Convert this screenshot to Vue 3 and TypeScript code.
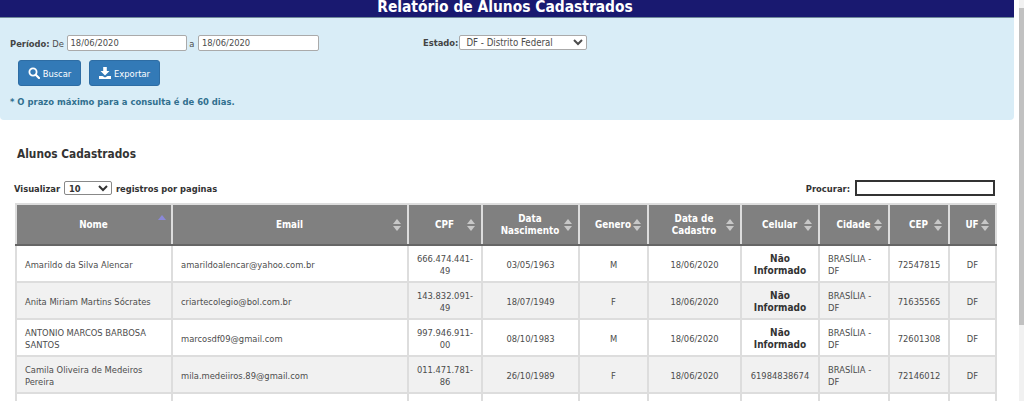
<script setup lang="ts">
interface Row { nome: string; email: string; cpf: string; nasc: string; gen: string; cad: string; cel: string; cep: string }
const rows: Row[] = [
  { nome: 'Amarildo da Silva Alencar', email: 'amarildoalencar@yahoo.com.br', cpf: '666.474.441-49', nasc: '03/05/1963', gen: 'M', cad: '18/06/2020', cel: '', cep: '72547815' },
  { nome: 'Anita Miriam Martins Sócrates', email: 'criartecolegio@bol.com.br', cpf: '143.832.091-49', nasc: '18/07/1949', gen: 'F', cad: '18/06/2020', cel: '', cep: '71635565' },
  { nome: 'ANTONIO MARCOS BARBOSA SANTOS', email: 'marcosdf09@gmail.com', cpf: '997.946.911-00', nasc: '08/10/1983', gen: 'M', cad: '18/06/2020', cel: '', cep: '72601308' },
  { nome: 'Camila Oliveira de Medeiros Pereira', email: 'mila.medeiiros.89@gmail.com', cpf: '011.471.781-86', nasc: '26/10/1989', gen: 'F', cad: '18/06/2020', cel: '61984838674', cep: '72146012' },
]
const heads: { t: string; w: number; sorted?: boolean }[] = [
  { t: 'Nome', w: 156, sorted: true }, { t: 'Email', w: 236 }, { t: 'CPF', w: 74 },
  { t: 'Data Nascimento', w: 97 }, { t: 'Genero', w: 69 }, { t: 'Data de Cadastro', w: 93 },
  { t: 'Celular', w: 78 }, { t: 'Cidade', w: 70 }, { t: 'CEP', w: 60 }, { t: 'UF', w: 47 },
]
</script>

<template>
  <div class="page">
    <main class="main">
      <h1 class="title">Relatório de Alunos Cadastrados</h1>
      <section class="filters">
        <div class="filter-row">
          <div class="period">
            <b>Período:</b> De
            <input class="date" value="18/06/2020" />
            a
            <input class="date date-end" value="18/06/2020" />
          </div>
          <div class="state">
            <b>Estado:</b>
            <select class="state-select"><option>DF - Distrito Federal</option></select>
          </div>
        </div>
        <div class="actions">
          <button class="btn btn-a">
            <svg width="12" height="12" viewBox="0 0 12 12" fill="none" stroke="#fff"><circle cx="5" cy="5" r="3.6" stroke-width="1.8" /><path d="M7.7 7.7 11 11" stroke-width="2.2" stroke-linecap="round" /></svg>
            Buscar
          </button>
          <button class="btn btn-b">
            <svg width="12" height="12" viewBox="0 0 12 12" fill="#fff"><path d="M4.2 0h3.6v4H10.500L6 8.400 1.500 4h2.700z" /><path d="M0 9h3.500L6 10.400 8.500 9H12v3H0z" /></svg>
            Exportar
          </button>
        </div>
        <p class="note">* O prazo máximo para a consulta é de 60 dias.</p>
      </section>

      <h2 class="subtitle">Alunos Cadastrados</h2>

      <div class="tools">
        <label class="len">Visualizar
          <select class="len-select"><option>10</option></select>
          registros por paginas</label>
        <label class="search">Procurar: <input class="search-input" /></label>
      </div>

      <table class="grid">
        <colgroup><col v-for="h in heads" :key="h.t" :style="{ width: h.w + 'px' }" /></colgroup>
        <thead>
          <tr>
            <th v-for="h in heads" :key="h.t">
              {{ h.t }}
              <span class="sort" :class="{ on: h.sorted }"></span>
            </th>
          </tr>
        </thead>
        <tbody>
          <tr v-for="r in rows" :key="r.email">
            <td>{{ r.nome }}</td>
            <td>{{ r.email }}</td>
            <td class="c">{{ r.cpf }}</td>
            <td class="c">{{ r.nasc }}</td>
            <td class="c">{{ r.gen }}</td>
            <td class="c">{{ r.cad }}</td>
            <td class="c"><b v-if="!r.cel" class="ni">Não Informado</b><template v-else>{{ r.cel }}</template></td>
            <td>BRASÍLIA - DF</td>
            <td class="c">{{ r.cep }}</td>
            <td class="c">DF</td>
          </tr>
          <tr class="last">
            <td></td><td></td><td></td><td></td><td></td><td></td><td></td>
            <td>BRASÍLIA - DF</td>
            <td></td><td></td>
          </tr>
        </tbody>
      </table>
    </main>
    <aside class="scrollbar"><div class="thumb"></div></aside>
  </div>
</template>

<style>
html, body { margin: 0; overflow: hidden; background: #fff; }
</style>

<style scoped>
.page { display: flex; height: 401px; overflow: hidden; font-family: "DejaVu Sans Condensed", "DejaVu Sans", sans-serif; font-stretch: condensed; font-size: 9.3px; color: #4c4c4c; }
.main { width: 1014px; flex: none; }
.scrollbar { margin-left: 5px; flex: 1; background: #f1f1f1; padding-top: 8px; }
.thumb { height: 317px; background: #c1c1c1; }
.title { margin: 0; height: 18px; padding-right: 4px; background: #191970; border-bottom: 1px solid #6f8a9a; box-sizing: border-box; color: #fff; text-align: center; font-size: 15.4px; font-weight: 700; line-height: 14px; overflow: hidden; }
.filters { height: 102px; box-sizing: border-box; background: #d9edf7; border-radius: 0 0 4px 4px; padding: 16px 10px 0; }
.filter-row { display: flex; align-items: center; height: 17px; }
.period { width: 413px; }
.period b, .state b { color: #444; }
.date { width: 120px; height: 16px; box-sizing: border-box; margin: 0; padding: 0 3px; border: 1px solid #aaa; border-radius: 2px; font: inherit; color: #4c4c4c; background: #fff; }
.date-end { width: 121px; margin-left: 1px; }
.state-select { width: 128px; height: 15px; box-sizing: border-box; margin-left: 1px; padding: 0 0 0 2px; border: 1px solid #aaa; border-radius: 2px; font: inherit; font-size: 9.6px; color: #4c4c4c; background: #fff; }
.actions { display: flex; gap: 8px; margin: 9px 0 0 8px; }
.btn { display: flex; align-items: center; justify-content: center; gap: 3px; height: 26px; padding: 0; border: 1px solid #2e6da4; border-radius: 3px; background: #337ab7; color: #fff; font: inherit; }
.btn-a { width: 63px; }
.btn-b { width: 71px; }
.note { margin: 9px 0 0; font-size: 9.4px; font-weight: 700; color: #31708f; line-height: 14px; }
.subtitle { margin: 26px 0 0 17px; height: 16px; font-size: 11.8px; font-weight: 700; line-height: 16px; color: #333; }
.tools { display: flex; justify-content: space-between; align-items: center; margin: 17px 19px 0 14px; height: 18px; font-weight: 700; color: #333; }
.len-select { width: 48px; height: 14px; box-sizing: border-box; margin: 0 1px; padding: 0; border: 1px solid #888; border-radius: 2px; background: #fff; font: inherit; color: #333; }
.search { display: flex; align-items: center; gap: 5px; }
.search-input { width: 140px; height: 16px; box-sizing: border-box; border: 2px solid #333; padding: 0; background: #fff; }
.grid { width: 980px; margin: 6px 0 0 15px; border-collapse: collapse; table-layout: fixed; }
th, td { border: 2px solid #ddd; line-height: 12px; vertical-align: middle; }
th { position: relative; height: 33px; padding: 3px 9px 3px 8px; background: #808080; color: #fff; font-size: 9.8px; font-weight: 700; text-align: center; border-bottom-color: #666; }
td { height: 31px; padding: 3px 8px 1px; box-sizing: content-box; }
tbody tr:nth-child(even) td { background: #f1f1f1; }
td.c { text-align: center; padding: 3px 6px 1px; }
.ni { color: #333; font-size: 10px; }
.sort { position: absolute; right: 6px; top: 50%; margin-top: -7px; width: 8px; height: 14px; }
.sort::before, .sort::after { content: ""; position: absolute; left: 0; border-left: 4px solid transparent; border-right: 4px solid transparent; }
.sort::before { top: 1px; border-bottom: 5px solid #c8c8c8; }
.sort::after { bottom: 1px; border-top: 5px solid #c8c8c8; }
.sort.on { margin-top: -11px; right: 5px; }
.sort.on::before { border-bottom-color: #8a88d8; }
.sort.on::after { display: none; }
</style>
